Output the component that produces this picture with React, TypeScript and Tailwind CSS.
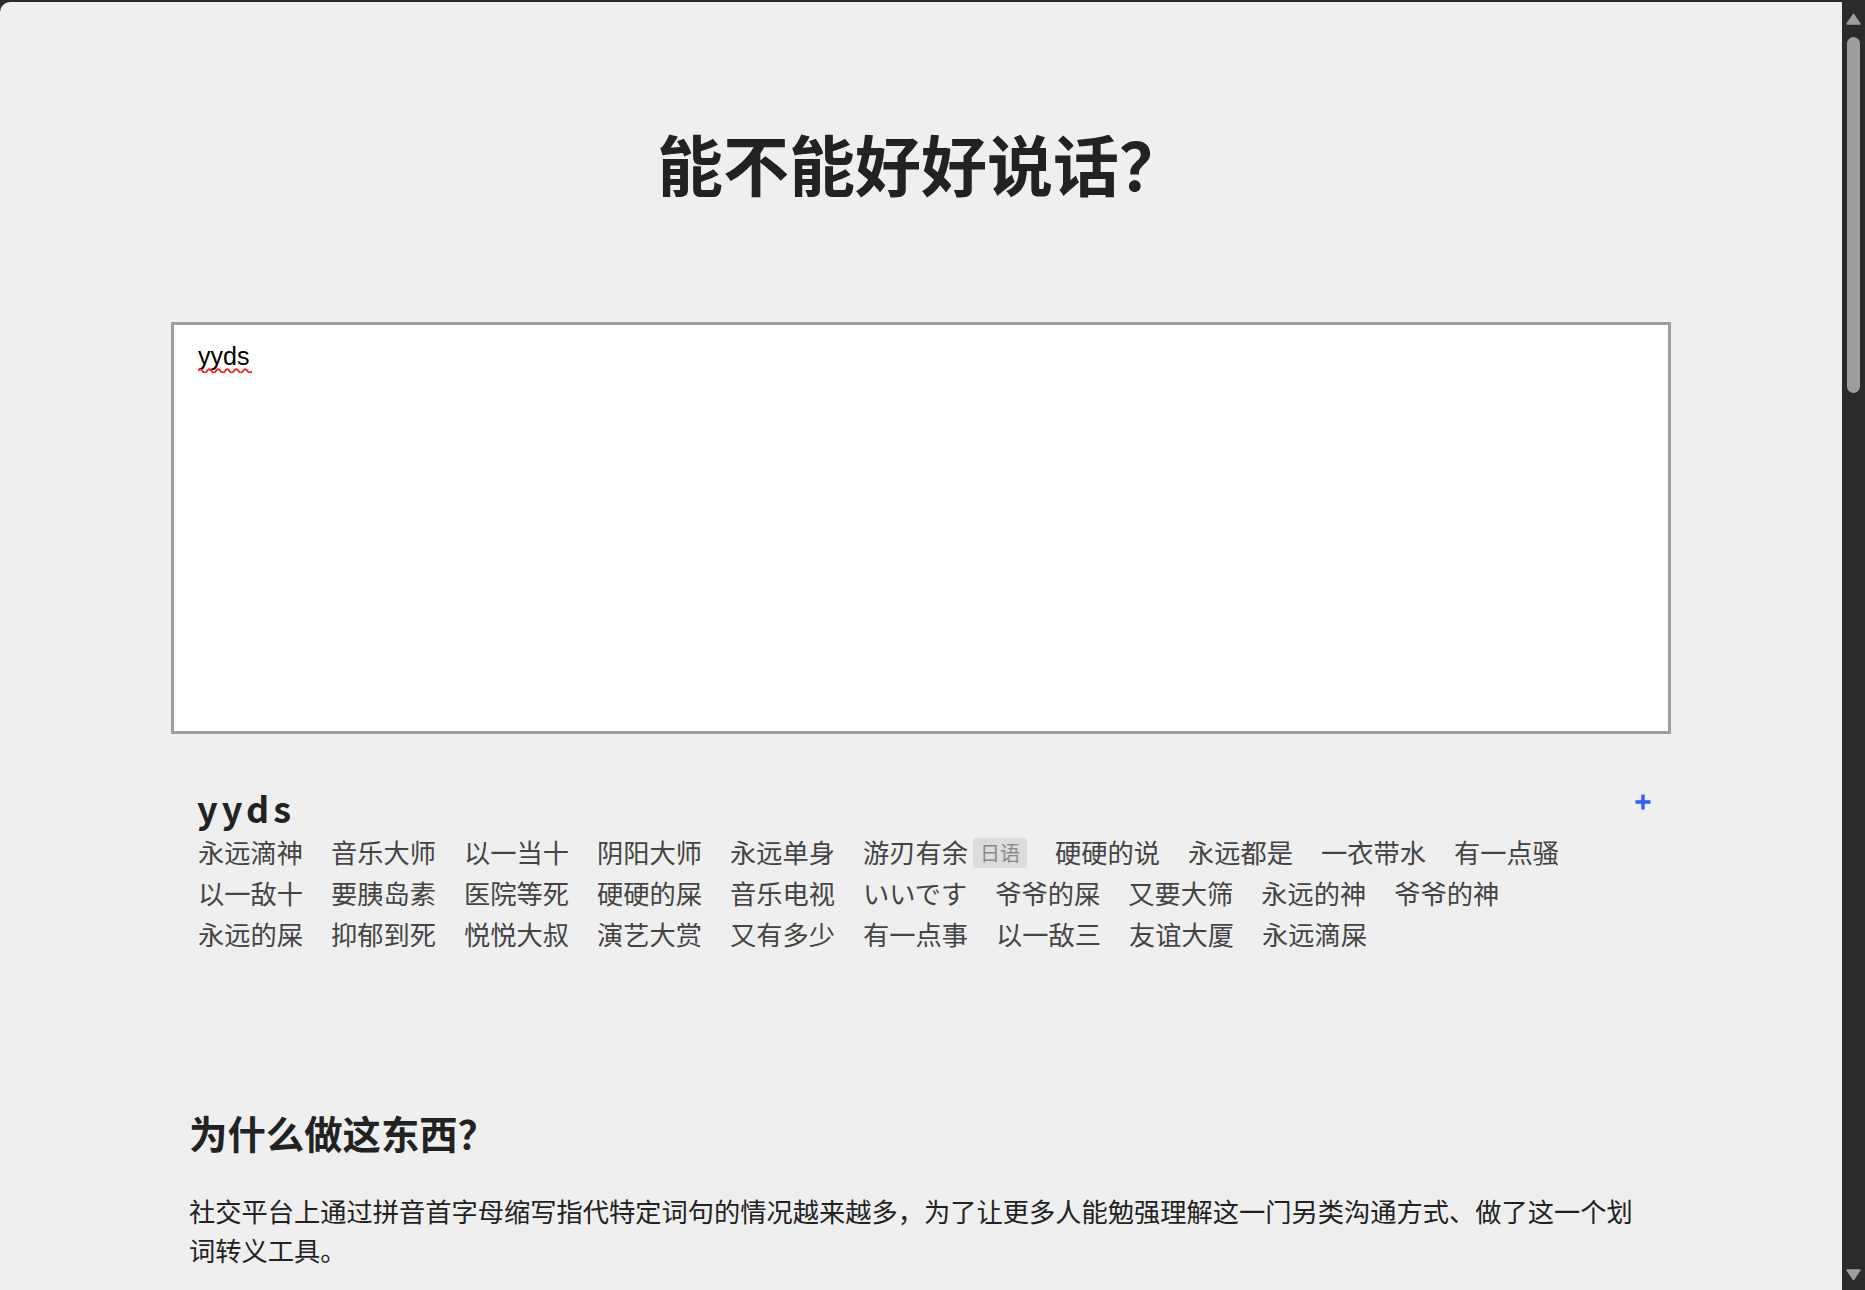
import { useState } from "react";

type Tag = { text: string; lang?: string };

const tags: Tag[] = [
  { text: "永远滴神" },
  { text: "音乐大师" },
  { text: "以一当十" },
  { text: "阴阳大师" },
  { text: "永远单身" },
  { text: "游刃有余", lang: "日语" },
  { text: "硬硬的说" },
  { text: "永远都是" },
  { text: "一衣带水" },
  { text: "有一点骚" },
  { text: "以一敌十" },
  { text: "要胰岛素" },
  { text: "医院等死" },
  { text: "硬硬的屎" },
  { text: "音乐电视" },
  { text: "いいです" },
  { text: "爷爷的屎" },
  { text: "又要大筛" },
  { text: "永远的神" },
  { text: "爷爷的神" },
  { text: "永远的屎" },
  { text: "抑郁到死" },
  { text: "悦悦大叔" },
  { text: "演艺大赏" },
  { text: "又有多少" },
  { text: "有一点事" },
  { text: "以一敌三" },
  { text: "友谊大厦" },
  { text: "永远滴屎" },
];

function Scrollbar() {
  return (
    <aside className="flex h-full w-[23px] shrink-0 flex-col items-center bg-[#2b2b2b] pb-[9px] pt-[13px]">
      <svg width="15" height="12" viewBox="0 0 15 12">
        <polygon points="7.5,1.5 14,11 1,11" fill="#9e9e9e" stroke="#9e9e9e" strokeWidth="1.5" strokeLinejoin="round" />
      </svg>
      <div className="mt-[12px] h-[356px] w-[13px] rounded-full bg-[#9e9e9e]" />
      <svg className="mt-auto" width="15" height="12" viewBox="0 0 15 12">
        <polygon points="1,1 14,1 7.5,10.5" fill="#9e9e9e" stroke="#9e9e9e" strokeWidth="1.5" strokeLinejoin="round" />
      </svg>
    </aside>
  );
}

export default function App() {
  const [query, setQuery] = useState("yyds");

  return (
    <div className="flex h-screen w-full overflow-hidden bg-[#2b2b2b] font-['Noto_Sans_CJK_SC','Noto_Sans',sans-serif]">
      <main className="mt-[2px] flex-1 overflow-hidden rounded-tl-[10px] bg-[#efefef]">
        <div className="mx-auto w-[1500px] pt-[111px]">
          <h1 className="text-center text-[66px] font-bold leading-[98px] text-[#222]">能不能好好说话？</h1>

          <div className="relative mt-[111px]">
            <textarea
              className="block h-[412px] w-full resize-none border-[3px] border-[#9e9e9e] bg-white px-[24px] pt-[17px] font-['Liberation_Sans',Arial,sans-serif] text-[25px] leading-[29px] text-black outline-none"
              onChange={(e) => setQuery(e.target.value)}
              spellCheck={false}
              value={query}
            />
            <svg className="pointer-events-none absolute left-[27px] top-[45px]" width="54" height="6" viewBox="0 0 54 6">
              <path d="M0 4 Q2.25 0.5 4.5 4 T9 4 T13.5 4 T18 4 T22.5 4 T27 4 T31.5 4 T36 4 T40.5 4 T45 4 T49.5 4 T54 4" fill="none" stroke="#ff1a1a" strokeWidth="1.8" />
            </svg>
          </div>

          <section className="mt-[50px] pl-[26px] pr-[20px]">
            <div className="flex items-start justify-between">
              <h2 className="mt-[-2px] text-[36px] font-bold leading-[50px] tracking-[4px] text-[#222]">{query}</h2>
              <button className="mt-[10px]" type="button" aria-label="add">
                <svg width="16" height="16" viewBox="0 0 16 16">
                  <path d="M8 0.5v15M0.5 8h15" stroke="#2f5bff" strokeWidth="3.4" />
                </svg>
              </button>
            </div>
            <div className="flex w-[1400px] flex-wrap gap-x-[28px] pl-[1px] text-[26.25px] leading-[41px] text-[#444]">
              {tags.map((tag) => (
                <span key={tag.text} className="flex items-center">
                  {tag.text}
                  {tag.lang ? (
                    <span className="ml-[5px] inline-block h-[30px] rounded-[3px] bg-[#dcdcdc] px-[7px] text-[20px] leading-[30px] text-[#888]">
                      {tag.lang}
                    </span>
                  ) : null}
                </span>
              ))}
            </div>
          </section>

          <section className="mt-[149px] px-[18px] text-[#222]">
            <h2 className="text-[38.4px] font-bold leading-[57.6px]">为什么做这东西？</h2>
            <p className="mt-[30px] text-[26.25px] leading-[39.4px]">
              社交平台上通过拼音首字母缩写指代特定词句的情况越来越多，为了让更多人能勉强理解这一门另类沟通方式、做了这一个划词转义工具。
            </p>
          </section>
        </div>
      </main>
      <Scrollbar />
    </div>
  );
}
